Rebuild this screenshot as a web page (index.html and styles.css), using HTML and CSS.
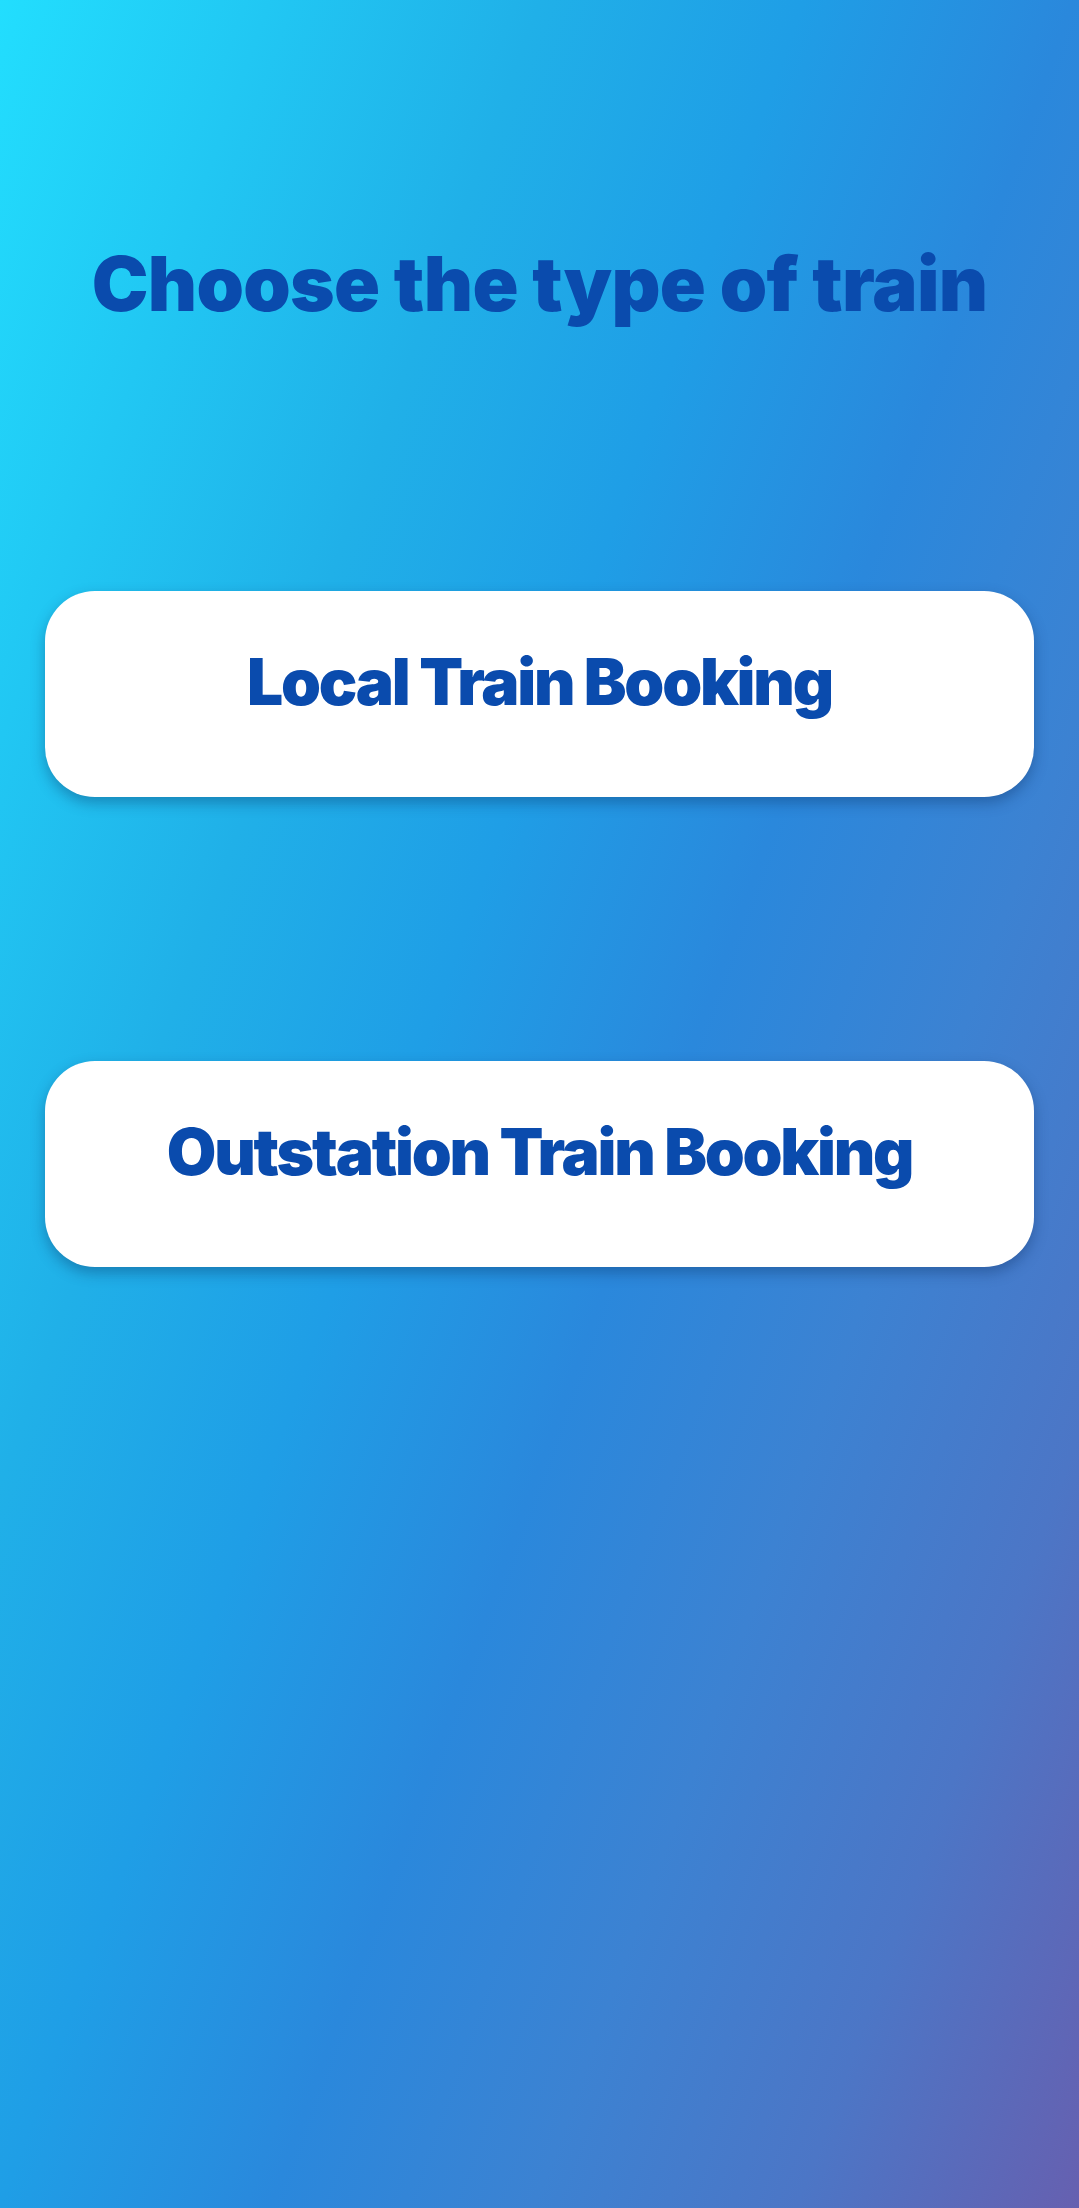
FILE: index.html
```html
<!DOCTYPE html>
<html lang="en">
<head>
<meta charset="utf-8">
<title>Choose the type of train</title>
<link rel="stylesheet" href="styles.css">
</head>
<body>
<main class="screen">
  <h1 class="title">Choose the type of train</h1>
  <div class="options">
    <button class="option" type="button"><span class="option-label">Local Train Booking</span></button>
    <button class="option" type="button"><span class="option-label">Outstation Train Booking</span></button>
  </div>
</main>
</body>
</html>
```

FILE: styles.css
```css
* { box-sizing: border-box; }

html, body {
  margin: 0;
  padding: 0;
}

body {
  width: 1079px;
  height: 2208px;
  overflow: hidden;
  font-family: "Inter", "Lato", "Liberation Sans", sans-serif;
  background: linear-gradient(110deg,
    #22defe 0%,
    #20b0e8 28.7%,
    #1f9ee6 42.7%,
    #2a88dc 57%,
    #3c82d2 71%,
    #4c76c6 85%,
    #6660b0 100%);
}

.screen {
  display: flex;
  flex-direction: column;
  align-items: center;
  padding: 245px 45px 0;
  height: 100%;
}

.title {
  margin: 0;
  font-size: 76px;
  line-height: 76px;
  font-weight: 900;
  color: #0a4bad;
  letter-spacing: -0.7px;
  white-space: nowrap;
  text-align: center;
}

.options {
  margin-top: 270px;
  width: 100%;
  display: flex;
  flex-direction: column;
  gap: 264px;
}

.option {
  width: 100%;
  height: 206px;
  border: none;
  border-radius: 50px;
  background: #ffffff;
  box-shadow: 0 6px 14px rgba(10, 40, 90, 0.35);
  display: flex;
  align-items: center;
  justify-content: center;
  padding: 0 0 24px;
  font: inherit;
  cursor: pointer;
}

.option-label {
  font-size: 64px;
  line-height: 64px;
  font-weight: 900;
  color: #0a4bad;
  letter-spacing: -2.2px;
  white-space: nowrap;
}
```
